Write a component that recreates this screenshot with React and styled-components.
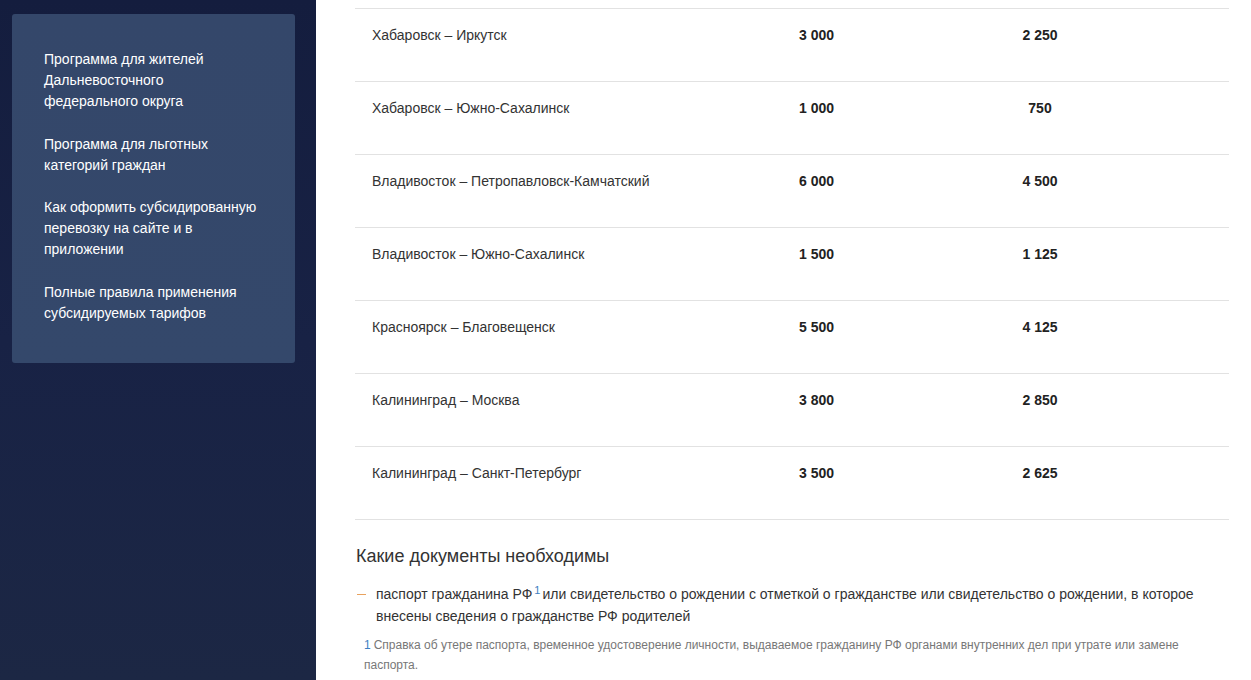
import React from "react";
import styled, { createGlobalStyle } from "styled-components";

const Global = createGlobalStyle`
  html, body { margin: 0; padding: 0; height: 100%; }
  body { font-family: "Liberation Sans", Arial, sans-serif; background: #fff; overflow: hidden; }
  #root { height: 100%; }
`;

const Page = styled.div`
  display: flex;
  height: 680px;
`;

const Sidebar = styled.aside`
  flex: 0 0 316px;
  box-sizing: border-box;
  padding: 14px 21px 0 12px;
  background: linear-gradient(180deg, #141d3e 0%, #182245 50%, #1c2744 100%);
`;

const NavCard = styled.nav`
  background: linear-gradient(180deg, #34476a 0%, #34486b 100%);
  border-radius: 3px;
  padding: 35px 20px 39px 32px;
  display: flex;
  flex-direction: column;
  gap: 21.5px;
`;

const NavLink = styled.a`
  color: #fff;
  font-size: 14px;
  line-height: 21px;
  text-decoration: none;
  max-width: 215px;
`;

const Main = styled.main`
  flex: 1;
  padding: 8px 22px 0 39px;
  color: #333;
`;

const Table = styled.div`
  border-top: 1px solid #e2e2e2;
`;

const Row = styled.div`
  display: grid;
  grid-template-columns: 444px 160px 162px 1fr;
  height: 72px;
  border-bottom: 1px solid #e2e2e2;
  font-size: 14px;
  line-height: 20px;
  box-sizing: content-box;
`;

const Cell = styled.div`
  padding-top: 16px;
  padding-left: ${(p) => (p.$first ? "17px" : "0")};
  font-weight: ${(p) => (p.$bold ? 700 : 400)};
  text-align: ${(p) => (p.$center ? "center" : "left")};
  color: ${(p) => (p.$bold ? "#222" : "#333")};
`;

const Heading = styled.h3`
  margin: 25px 0 0 1px;
  font-size: 18px;
  line-height: 22px;
  font-weight: 400;
  color: #333;
`;

const List = styled.ul`
  list-style: none;
  margin: 16px 0 0 0;
  padding: 0;
`;

const Item = styled.li`
  position: relative;
  padding-left: 21px;
  font-size: 14px;
  line-height: 22px;
  color: #333;
  &::before {
    content: "";
    position: absolute;
    left: 2px;
    top: 11px;
    width: 9px;
    height: 1px;
    background: #e8a25e;
  }
`;

const Sup = styled.sup`
  color: #3d7fc2;
  font-size: 11px;
  line-height: 0;
  vertical-align: 5px;
  margin: 0 2px 0 2px;
`;

const Note = styled.p`
  margin: 8px 0 0 9px;
  font-size: 12px;
  line-height: 20px;
  color: #777;
`;

const NoteNum = styled.span`
  color: #3d7fc2;
  margin-right: 3px;
`;

const rows = [
  ["Хабаровск – Иркутск", "3 000", "2 250"],
  ["Хабаровск – Южно-Сахалинск", "1 000", "750"],
  ["Владивосток – Петропавловск-Камчатский", "6 000", "4 500"],
  ["Владивосток – Южно-Сахалинск", "1 500", "1 125"],
  ["Красноярск – Благовещенск", "5 500", "4 125"],
  ["Калининград – Москва", "3 800", "2 850"],
  ["Калининград – Санкт-Петербург", "3 500", "2 625"],
];

const links = [
  "Программа для жителей Дальневосточного федерального округа",
  "Программа для льготных категорий граждан",
  "Как оформить субсидированную перевозку на сайте и в приложении",
  "Полные правила применения субсидируемых тарифов",
];

export default function App() {
  return (
    <>
      <Global />
      <Page>
        <Sidebar>
          <NavCard>
            {links.map((l) => (
              <NavLink key={l} href="#">
                {l}
              </NavLink>
            ))}
          </NavCard>
        </Sidebar>
        <Main>
          <Table>
            {rows.map(([route, full, sub]) => (
              <Row key={route}>
                <Cell $first>{route}</Cell>
                <Cell $bold>{full}</Cell>
                <Cell $bold $center>{sub}</Cell>
                <Cell />
              </Row>
            ))}
          </Table>
          <Heading>Какие документы необходимы</Heading>
          <List>
            <Item>
              паспорт гражданина РФ<Sup>1</Sup>или свидетельство о рождении с отметкой о гражданстве или
              свидетельство о рождении, в которое внесены сведения о гражданстве РФ родителей
            </Item>
          </List>
          <Note>
            <NoteNum>1</NoteNum>Справка об утере паспорта, временное удостоверение личности, выдаваемое
            гражданину РФ органами внутренних дел при утрате или замене паспорта.
          </Note>
        </Main>
      </Page>
    </>
  );
}
